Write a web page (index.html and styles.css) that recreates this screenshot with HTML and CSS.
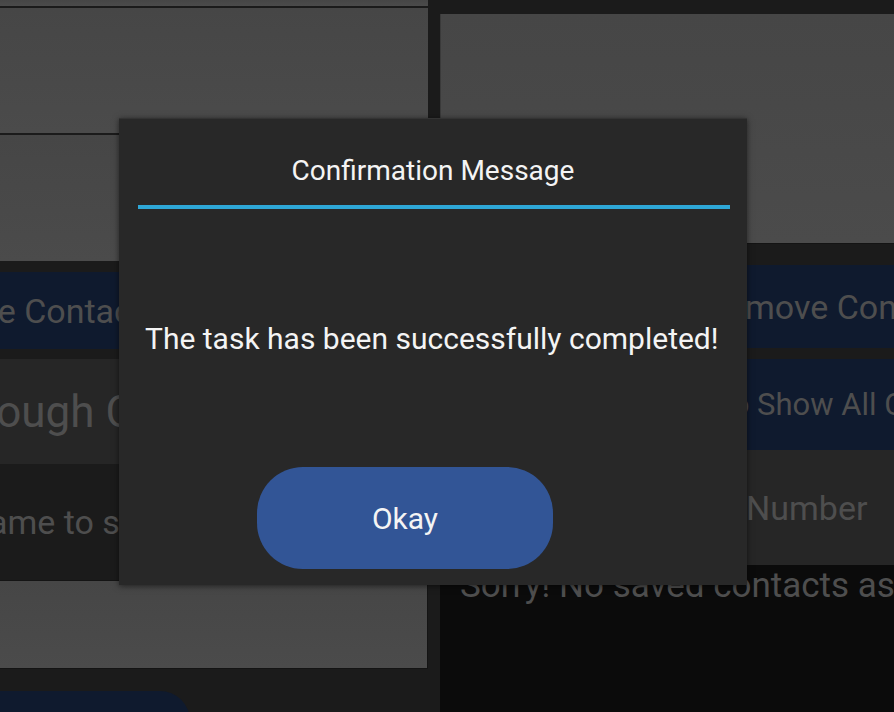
FILE: index.html
```html
<!DOCTYPE html>
<html>
<head>
<meta charset="utf-8">
<link rel="stylesheet" href="styles.css">
</head>
<body>
<div class="app">
  <div class="col col-left">
    <div class="panel p0"></div>
    <div class="panel p1"></div>
    <div class="panel p2"></div>
    <div class="btn navy l-save"><span class="lbl">Save Contact</span></div>
    <div class="field l-search"><span class="lbl big">Search through Contacts</span></div>
    <div class="input l-name"><span class="lbl">Enter name to search</span></div>
    <div class="panel p3"></div>
    <div class="pill navy"></div>
  </div>
  <div class="col col-right">
    <div class="panel r0"></div>
    <div class="btn navy r-remove"><span class="lbl">Remove Contact</span></div>
    <div class="btn navy r-show"><span class="lbl">Click to Show All Contacts</span></div>
    <div class="field r-number"><span class="lbl">Enter Phone Number</span></div>
    <div class="list"><span class="lbl">Sorry! No saved contacts as of now</span></div>
  </div>
</div>

<div class="dialog">
  <div class="dlg-title">Confirmation Message</div>
  <div class="dlg-rule"></div>
  <div class="dlg-msg">The task has been successfully completed!</div>
  <div class="dlg-foot"><button class="okay">Okay</button></div>
</div>
</body>
</html>
```
FILE: styles.css
```css
html, body {
  margin: 0;
  padding: 0;
}
body {
  width: 894px;
  height: 712px;
  overflow: hidden;
  background: #1b1b1b;
  font-family: Roboto, "Noto Sans", sans-serif;
  position: relative;
}
.app {
  display: flex;
  gap: 12px;
  height: 712px;
}
.col {
  display: flex;
  flex-direction: column;
  overflow: hidden;
}
.col-left { width: 428px; flex: none; }
.col-right { flex: 1; }

.panel {
  background: linear-gradient(#464646, #4b4b4b);
  box-sizing: border-box;
  flex: none;
}
.p0 { height: 6px; }
.p1 { height: 125px; margin-top: 2px; }
.p2 { height: 126px; margin-top: 2px; }
.p3 { height: 89px; margin-top: 1px; border: 1px solid #141414; border-left: none; }
.r0 { height: 230px; margin-top: 14px; border-left: 1px solid #3a3a3a; border-bottom: 1px solid #141414; }

.lbl {
  color: #4e4e4e;
  font-size: 34px;
  white-space: nowrap;
  display: block;
}
.big { font-size: 44px; }

.btn, .field, .input, .list {
  flex: none;
  display: flex;
  align-items: center;
  overflow: hidden;
}
.navy { background: #0f1a2e; }
.field { background: #262626; }

.l-save { height: 77px; margin-top: 11px; }
.l-save .lbl { margin-left: -57px; }
.l-search { height: 105px; margin-top: 10px; }
.l-search .lbl { margin-left: -203px; }
.l-name { height: 115px; }
.l-name .lbl { margin-left: -117px; }

.pill {
  width: 190px;
  height: 60px;
  margin-top: 22px;
  border-radius: 0 30px 30px 0;
  flex: none;
}

.r-remove { height: 83px; margin-top: 21px; }
.r-remove .lbl { padding-left: 266px; }
.r-show { height: 91px; margin-top: 11px; }
.r-show .lbl { padding-left: 207px; font-size: 31px; }
.r-number { height: 115px; }
.r-number .lbl { padding-left: 114px; }
.list {
  flex: 1;
  background: #0b0b0b;
  align-items: flex-start;
}
.list .lbl { padding: 0 0 0 20px; font-size: 35px; }

/* dialog overlay */
.dialog {
  position: absolute;
  left: 119px;
  top: 118px;
  width: 628px;
  height: 467px;
  box-sizing: border-box;
  background: #282828;
  border-top: 1px solid #333;
  box-shadow: 0 1px 6px rgba(0,0,0,0.55);
  display: flex;
  flex-direction: column;
}
.dlg-title {
  color: #f4f4f4;
  font-size: 28px;
  text-align: center;
  padding-top: 37px;
  line-height: 30px;
}
.dlg-rule {
  height: 4px;
  background: #2ea7d7;
  margin: 19px 17px 0 19px;
}
.dlg-msg {
  color: #f4f4f4;
  font-size: 30px;
  line-height: 34px;
  padding: 113px 0 0 26px;
}
.dlg-foot {
  padding: 111px 0 0 138px;
}
.okay {
  width: 296px;
  height: 102px;
  border: none;
  border-radius: 46px;
  background: #325596;
  color: #f4f4f4;
  font-family: Roboto, "Noto Sans", sans-serif;
  font-size: 30px;
  padding: 0;
}
```
